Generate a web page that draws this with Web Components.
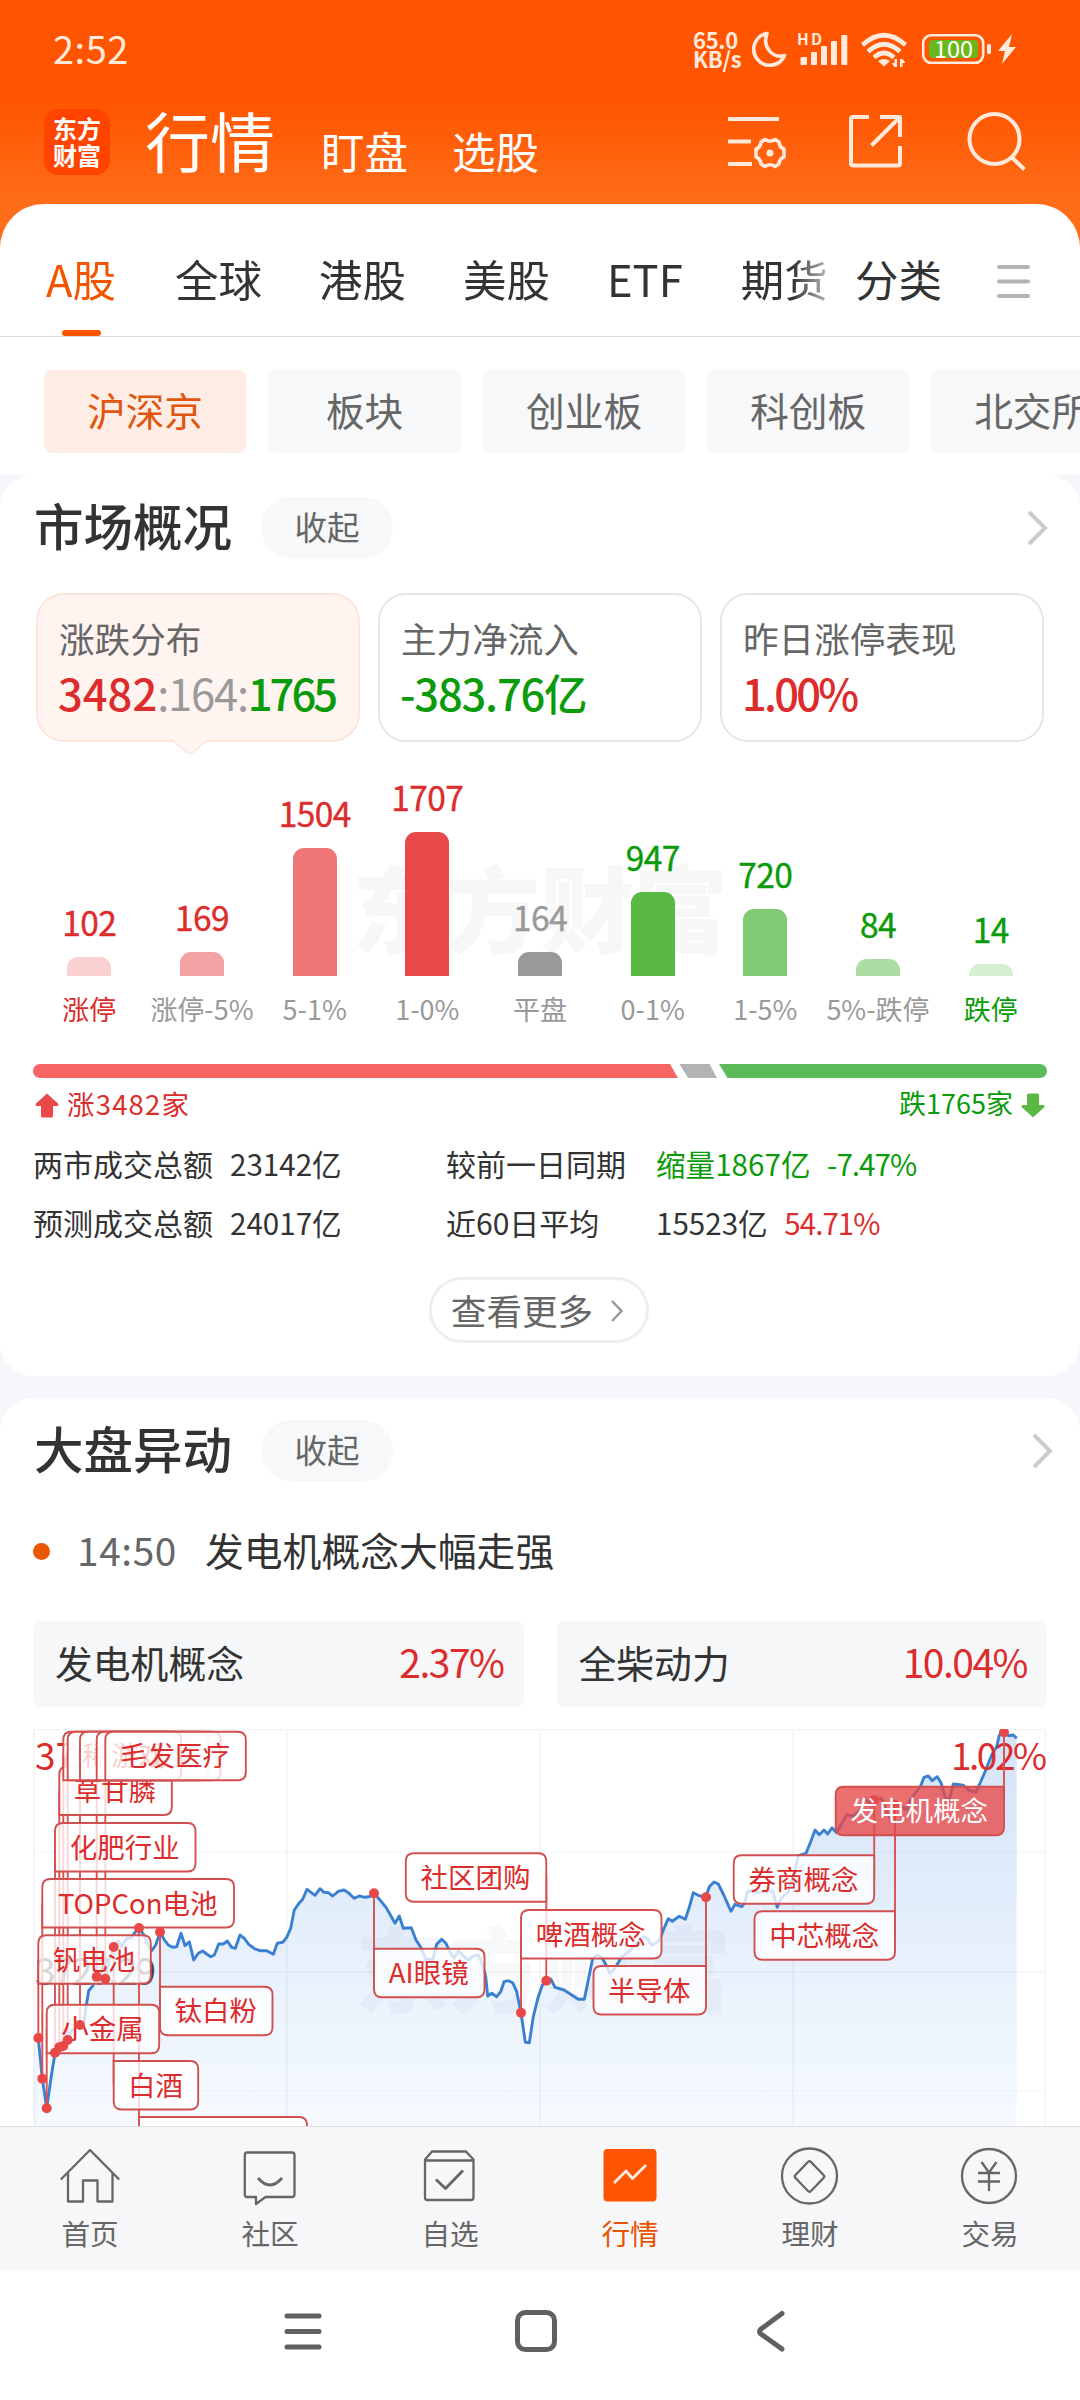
<!DOCTYPE html>
<html lang="zh-CN">
<head>
<meta charset="utf-8">
<title>行情</title>
<style>
  body {
    margin: 0;
    width: 1080px;
    height: 2400px;
    overflow: hidden;
    background: #f5f7fa;
    color: #333;
    font-family: "Noto Sans CJK SC", "Noto Sans", sans-serif;
  }
</style>
</head>
<body>
<market-page></market-page>

<script>
const RED = '#dc2c2c'
const GREEN = '#0a9b0a'

// attaches an open shadow root and fills it
const render = (host, html) => {
  const template = document.createElement('template')
  template.innerHTML = html
  host.attachShadow({ mode: 'open' }).appendChild(template.content.cloneNode(true))
}

customElements.define('status-bar',
  class extends HTMLElement {
    constructor () {
      super()
      render(this, `
        <time>2:52</time>
        <div class="speed"><span>65.0</span><span>KB/s</span></div>
        <svg width="342" height="96" viewBox="738 0 342 96" fill="none" stroke="#ffeadd">
          <path stroke-width="3.6" stroke-linejoin="round" d="M767 33.5A16 16 0 1 0 784.5 55.5C772 59 762 46 767 33.5Z"/>
          <g fill="#ffeadd" stroke="none">
            <rect x="800.5" y="57" width="6.5" height="8" rx="1"/>
            <rect x="811" y="52" width="6" height="13" rx="1"/>
            <rect x="821" y="46" width="6" height="19" rx="1"/>
            <rect x="831" y="41" width="6" height="24" rx="1"/>
            <rect x="841.3" y="35" width="6" height="30" rx="1"/>
            <path d="M878 61Q884 57 890 61L884 66.500Z"/>
            <rect x="987" y="44" width="4" height="10" rx="1.500"/>
            <path d="M1012 34L998 51H1005L1002 64L1016 47H1009Z"/>
            <path d="M897 59v8h-2.500l-3-4h3v-4ZM900 67v-8h2.500l3 4h-3v4Z"/>
            <text x="797" y="45" font-size="15.500" font-weight="700" textLength="25">HD</text>
          </g>
          <path stroke-width="4.600" d="M862.500 45Q884 25.500 905.500 45M868 51.500Q884 37 900 51.500M874 57.500Q884 48.500 894 57.500"/>
          <rect x="923.2" y="35.2" width="60" height="27.600" rx="8" stroke-width="2.600"/>
          <rect x="929" y="40" width="49" height="18" rx="4" fill="#6ab71b" stroke="none"/>
          <text x="953.5" y="57.500" text-anchor="middle" font-size="23.500" fill="#fff" stroke="none" textLength="39">100</text>
        </svg>
        <style>
          :host { display: flex; height: 96px; color: #ffeadd; }
          time { width: 640px; padding-left: 53px; font-size: 38px; line-height: 95px; letter-spacing: .5px; }
          .speed { display: flex; flex-direction: column; width: 45px; padding-top: 30px; font-size: 22px; font-weight: 700; line-height: 18.500px; letter-spacing: -.3px; }
        </style>`)
    }
  })

customElements.define('app-header',
  class extends HTMLElement {
    constructor () {
      super()
      render(this, `
        <div class="logo"><span>东方</span><span>财富</span></div>
        <h1>行情</h1>
        <span class="link">盯盘</span>
        <span class="link">选股</span>
        <svg width="310" height="64" viewBox="722 109 310 64" fill="none" stroke="#ffe9db" stroke-width="4">
          <path d="M728 119H779M728 141.500H751M728 164H752"/>
          <path stroke-width="3.600" stroke-linejoin="round" d="M765 139.500Q770 143 775 139.500L779 142Q779.500 147.500 784 149V157Q779.500 158.500 779 164L775 166.500Q770 163 765 166.500L761 164Q760.500 158.500 756 157V149Q760.500 147.500 761 142Z"/>
          <circle cx="770" cy="153" r="3.500" fill="#ffe9db" stroke="none"/>
          <path stroke-linejoin="round" d="M869 117H853Q851 117 851 119V163.500Q851 165.500 853 165.500H898Q900 165.500 900 163.500V146M880 117H900V137M900 117L871.500 145.500"/>
          <circle cx="994.5" cy="139" r="25"/>
          <path d="M1011.500 157L1024.500 169.500"/>
        </svg>
        <style>
          :host { display: flex; height: 108px; padding-left: 44px; color: #fff; }
          .logo {
            display: flex; flex-direction: column; align-items: center; box-sizing: border-box;
            width: 66px; height: 66px; margin-top: 13px; padding-top: 5px; border-radius: 14px;
            background: #ff4400; font-size: 24px; font-weight: 700; line-height: 27px;
          }
          h1 { width: 176px; margin: 0 0 0 35px; font-size: 65px; font-weight: 400; line-height: 86px; }
          .link { width: 131px; padding-top: 18px; font-size: 43.500px; line-height: 74px; }
          svg { margin: 13px 0 0 139px; }
        </style>`)
    }
  })

customElements.define('market-tabs',
  class extends HTMLElement {
    constructor () {
      super()
      render(this, `
        <div class="scroll">
          <span class="on">A股</span><span>全球</span><span>港股</span><span>美股</span><span>ETF</span><span>期货</span>
        </div>
        <span class="all">分类</span>
        <svg width="36" height="36" stroke="#b3b3b3" stroke-width="4" stroke-linecap="round"><path d="M3 4H32M3 18.500H32M3 33H32"/></svg>
        <style>
          :host {
            display: flex; align-items: center; height: 132px; padding-left: 45px;
            background: #fff; border-bottom: 1px solid #ddd; border-radius: 44px 44px 0 0; font-size: 43.500px;
          }
          .scroll {
            display: flex; gap: 57px; width: 784px; overflow: hidden; white-space: nowrap; line-height: 132px;
            -webkit-mask-image: linear-gradient(90deg, #000 748px, rgba(0, 0, 0, .35) 782px);
            mask-image: linear-gradient(90deg, #000 748px, rgba(0, 0, 0, .35) 782px);
          }
          .scroll span { flex: none; height: 132px; line-height: 149px; }
          .scroll span:last-child { margin-left: 1px; }
          .scroll .on { position: relative; margin-right: 2px; padding-left: 1px; color: #f25500; }
          .on::after { content: ""; position: absolute; left: 17px; bottom: 0; width: 39px; height: 6px; border-radius: 3px; background: #ff5500; }
          .all { margin-left: 26px; line-height: 149px; height: 132px; }
          svg { margin: 21px 0 0 54px; }
        </style>`)
    }
  })

customElements.define('board-chips',
  class extends HTMLElement {
    constructor () {
      super()
      render(this, `
        <span class="on">沪深京</span><span>板块</span><span>创业板</span><span>科创板</span><span>北交所</span>
        <style>
          :host { display: flex; gap: 22px; height: 83px; padding: 33px 0 22px 44px; overflow: hidden; background: #fff; }
          span {
            flex: none; box-sizing: border-box; min-width: 193px; padding: 0 43px; border-radius: 8px;
            background: #f7f8fa; color: #666; font-size: 38.700px; line-height: 79px; text-align: center;
          }
          .on { background: #ffede5; color: #e0560f; }
        </style>`)
    }
  })

customElements.define('section-card',
  class extends HTMLElement {
    constructor () {
      super()
      render(this, `
        <header>
          <h2>${this.getAttribute('heading')}</h2>
          <span>收起</span>
          <svg width="22" height="38" fill="none" stroke="#ccc" stroke-width="4"><path d="M2 3L18 19L2 35"/></svg>
        </header>
        <slot></slot>
        <style>
          :host { display: block; padding: 22px 33px 0; border-radius: 33px; background: #fff; }
          header { display: flex; align-items: center; height: 61px; }
          h2 { width: 227px; margin: -6px 0 0 1px; font-size: 49.500px; font-weight: 500; line-height: 56px; white-space: nowrap; }
          span { width: 132px; height: 61px; border-radius: 31px; background: #f7f8fa; color: #666; font-size: 32.500px; line-height: 57px; text-align: center; }
          svg { margin-left: auto; margin-right: var(--arrow-right, -2px); }
        </style>`)
    }
  })

customElements.define('summary-card',
  class extends HTMLElement {
    constructor () {
      super()
      render(this, `
        <label>${this.getAttribute('label')}</label>
        <div><slot></slot></div>
        <svg width="40" height="16"><path d="M2 0L17 12.500Q20 14.500 23 12.500L38 0" fill="#fff4f0" stroke="#fde5d9" stroke-width="1.500"/></svg>
        <style>
          :host {
            position: relative; box-sizing: border-box; flex: 1; height: 149px; padding: 21px 0 0 21px;
            border: 2px solid #e6e6e6; border-radius: 28px; background: #fff; white-space: nowrap;
          }
          :host([active]) { border-color: #fde5d9; background: #fff4f0; }
          label { display: block; color: #666; font-size: 35.600px; line-height: 44px; }
          div { margin: 7px 0 0 -1px; font-size: 43.500px; line-height: 52px; font-weight: 500; }
          svg { display: none; position: absolute; left: 132px; bottom: -16px; }
          :host([active]) svg { display: block; }
        </style>`)
    }
  })

customElements.define('spread-chart',
  class extends HTMLElement {
    constructor () {
      super()
      const columns = [
        ['102', '涨停', 19, '#f9d1d1', RED, RED],
        ['169', '涨停-5%', 24, '#f4a3a4', RED],
        ['1504', '5-1%', 128, '#ee7677', RED],
        ['1707', '1-0%', 144, '#e84848', RED],
        ['164', '平盘', 24, '#999', '#999'],
        ['947', '0-1%', 84, '#5ab943', GREEN],
        ['720', '1-5%', 67, '#83ca74', GREEN],
        ['84', '5%-跌停', 17, '#acdca1', GREEN],
        ['14', '跌停', 12, '#d6eed1', GREEN, GREEN]
      ]
      render(this, `
        <div class="mark">东方财富</div>
        ${columns.map(([count, range, height, fill, color, rangeColor]) => `
          <div class="col">
            <b style="color:${color}">${count}</b>
            <i style="height:${height}px;background:${fill}"></i>
            <span style="color:${rangeColor || '#999'}">${range}</span>
          </div>`).join('')}
        <style>
          :host { position: relative; display: grid; grid-template-columns: repeat(9, 1fr); height: 282px; white-space: nowrap; }
          .mark { position: absolute; left: 319px; top: 100px; color: #f7f7f7; font-size: 94px; font-weight: 900; line-height: 126px; }
          .col { position: relative; display: flex; flex-direction: column; align-items: center; justify-content: flex-end; }
          b { font-size: 33.500px; font-weight: 400; -webkit-text-stroke: .4px; line-height: 40px; margin-bottom: 15px; letter-spacing: -.6px; }
          i { width: 44px; border-radius: 11px 11px 0 0; }
          span { margin: 16px 0 -2px; font-size: 27px; line-height: 34px; }
        </style>`)
    }
  })

customElements.define('ratio-bar',
  class extends HTMLElement {
    constructor () {
      super()
      render(this, `
        <svg width="1014" height="14" viewBox="33 0 1014 14">
          <path d="M40 0H670L678 14H40A7 7 0 0 1 40 0Z" fill="#f76464"/>
          <path d="M679.500 0H709.500L717 14H688Z" fill="#b3b3b3"/>
          <path d="M719 0H1040A7 7 0 0 1 1040 14H727.500Z" fill="#5bbb5b"/>
        </svg>
        <div>
          <svg width="24" height="25"><path d="M12 .5L23.500 11Q24 13 22 13H18V23Q18 24.500 16.500 24.500H7.500Q6 24.500 6 23V13H2Q0 13 .5 11Z" fill="#e84848"/></svg>
          <span class="up">涨3482家</span>
          <span class="down">跌1765家</span>
          <svg width="24" height="25"><path d="M12 24.500L23.500 14Q24 12 22 12H18V2Q18 .5 16.500 .5H7.500Q6 .5 6 2V12H2Q0 12 .5 14Z" fill="#5ab943"/></svg>
        </div>
        <style>
          :host { display: block; padding-top: 40px; }
          svg { display: block; }
          div { display: flex; align-items: center; gap: 8px; height: 34px; margin-top: 10px; padding: 0 2px; font-size: 27px; line-height: 30px; }
          span { margin-top: -4px; }
          .up { color: ${RED}; font-size: 27.500px; letter-spacing: 1.200px; }
          .down { margin-left: auto; color: ${GREEN}; }
        </style>`)
    }
  })

customElements.define('turnover-table',
  class extends HTMLElement {
    constructor () {
      super()
      render(this, `
        <span>两市成交总额</span><span class="num">23142亿</span><span>较前一日同期</span><span class="num down">缩量1867亿 <em class="down">-7.47%</em></span>
        <span>预测成交总额</span><span class="num">24017亿</span><span>近60日平均</span><span class="num">15523亿 <em>54.71%</em></span>
        <style>
          :host {
            display: grid; grid-template-columns: 197px 216px 210px 1fr; grid-auto-rows: 59px;
            padding: 12px 0 0; font-size: 30px; line-height: 59px; white-space: nowrap;
          }
          .num { font-size: 29.600px; }
          em { margin-left: 10px; font-style: normal; color: ${RED}; letter-spacing: -1px; }
          .down { color: ${GREEN}; }
        </style>`)
    }
  })

customElements.define('more-button',
  class extends HTMLElement {
    constructor () {
      super()
      render(this, `
        <slot></slot>
        <svg width="16" height="24" fill="none" stroke="#999" stroke-width="2.500"><path d="M3 2L12.500 12L3 22"/></svg>
        <style>
          :host {
            display: flex; align-items: center; justify-content: center; gap: 16px; box-sizing: border-box;
            width: 220px; height: 66px; margin: 25px auto 33px; padding-right: 2px; border: 3px solid #eee; border-radius: 33px;
            color: #666; font-size: 35.600px; line-height: 56px;
          }
          :host { position: relative; left: -1px; }
          svg { margin-top: 2px; }
        </style>`)
    }
  })

customElements.define('alert-line',
  class extends HTMLElement {
    constructor () {
      super()
      render(this, `
        <i></i><time>${this.getAttribute('time')}</time><slot></slot>
        <style>
          :host { display: flex; align-items: center; height: 56px; padding: 40px 0 44px; font-size: 38.800px; line-height: 56px; white-space: nowrap; }
          i { width: 17px; height: 17px; margin-top: 5px; border-radius: 50%; background: #eb5600; }
          time { width: 128px; margin-left: 27px; color: #666; letter-spacing: .6px; }
        </style>`)
    }
  })

customElements.define('quote-box',
  class extends HTMLElement {
    constructor () {
      super()
      render(this, `
        <slot></slot><b>${this.getAttribute('change')}</b>
        <style>
          :host {
            display: flex; flex: 1; justify-content: space-between; height: 86px; padding: 0 20px 0 22px;
            border-radius: 8px; background: #f6f7f9; font-size: 37.800px; line-height: 81px;
          }
          b { color: ${RED}; font-size: 39px; font-weight: 400; letter-spacing: -1.500px; }
        </style>`)
    }
  })

customElements.define('index-chart',
  class extends HTMLElement {
    constructor () {
      super()
      const line = `38.3,2038 42.3,2078.7 46.7,2108.3 50.7,2080 55,2052.7 59.3,2047.3 63.3,2046 67.7,2040 71.7,2030 76,2028 80,2025 84,2022
        86,2007 88.7,1990.7 92.7,1986 96.7,1976.7 105.3,1978.7 109.3,1960 113.7,1947 118.3,1940.7 121.7,1946.7 126.7,1938 130.7,1938 134.7,1932.7
        139,1928 143.3,1934 147.3,1943.3 151.7,1950.7 155.7,1945 160,1932 164,1939.3 168.3,1945 172.3,1947.3 176.7,1946.7 181,1933.3 185,1945.7
        189.3,1941.7 193.7,1960 198.3,1953.3 202.7,1951 206.7,1954 210.7,1956.7 214.3,1955 218.7,1944 223.3,1944 227.3,1941 231.7,1947.3 235.3,1948.3
        240,1935 244.3,1938.3 248.7,1944.3 255,1949 260,1950.7 266.7,1950.7 273.3,1954.3 277.3,1943.3 282.7,1942.3 286.7,1937.3 290.7,1928.3
        294.3,1910 299,1903.3 302.7,1899.3 307,1889.3 315,1895.3 320,1888.7 324,1892.3 328.3,1892.7 332.7,1896 338.3,1891.3 344,1890 349,1893.3
        354,1898.3 359.3,1896 365,1897.3 370,1896.5 374,1893.3 380,1900 386,1907.3 395,1923.3 399.3,1916 403.3,1928.3 411.3,1927.7 416,1940
        420.7,1947.3 426,1959.3 432.7,1959.3 436.7,1944.3 441.7,1939.3 446,1943.3 449.3,1950.7 454,1958.3 458.3,1950.7 463.3,1956 468.3,1960
        473.3,1956 478.3,1955 482.7,1965 485.7,1976.7 487.7,1996 491.7,1993.3 496.7,1996.7 500.7,1991.7 504,1981.7 508.3,1980.7 512.7,1982.7
        516.7,1991.7 521,2012.7 525.3,2042.3 529.3,2042.7 533.3,2016.7 538.3,1996.7 542.3,1985.3 546.3,1980.7 551,1979.3 555,1987.3 564,1990
        573.3,1996 578.3,1999.3 584.3,1999.3 588.3,1980 592.7,1958.3 596.7,1955 601.7,1957.3 606,1965 610,1973.3 615,1968.3 621.7,1956.7 630,1950.7
        636.7,1942.7 643.3,1936.7 647.3,1938.3 651.7,1945.3 659.3,1940.7 664,1928.3 668.3,1918.7 672.3,1921.3 679.3,1916.3 685.3,1919.3 689.3,1907.3
        693.3,1892.7 698.3,1895.3 705.7,1897.3 709.3,1886.7 714,1882 718.3,1884 723.3,1894 731,1911.3 735,1904.3 741.7,1906.7 744.3,1903.3
        747.7,1891 758.3,1892.3 772.7,1891 777.3,1907.3 781,1898.3 788.3,1891.7 793.3,1876.7 798.3,1855.7 806,1853.3 810.7,1841.7 815,1830
        819.3,1834.7 824,1830 827.7,1834 832,1827.7 836.7,1832.7 841.7,1823.3 846.7,1815 853.3,1816 860,1810 865.3,1798.3 870,1804 874.3,1800
        881.7,1798.3 886,1810 890.7,1820 895,1805 900,1805 906.7,1810 910,1800 915,1793.3 920.7,1786 924,1777.3 928.3,1776 932.3,1780.7
        937.3,1776.7 941,1782.7 945,1796.7 949,1801 953.3,1784 963.3,1785.3 968.3,1790 975.7,1792.3 980,1783.3 985,1771.7 991.7,1755
        996.7,1746.7 999.3,1735 1004,1732.3 1008.3,1735.7 1013.3,1735 1016.7,1738.3`

      // text, box left, box top, box width, height of the dot on the line, pole side
      const flags = [
        ['TOPCon电池', 42.3, 1879, 191.7, 2078.7],
        ['钒电池', 38.3, 1935.3, 112.5, 2038],
        ['小金属', 46.7, 2004.7, 112.5, 2108.3],
        ['化肥行业', 55, 1823, 140.5, 2052.7],
        ['草甘膦', 59.3, 1766.5, 112.5, 2047.3],
        ['', 63.3, 1731.7, 112.5, 2046],
        ['稀土永磁', 67.7, 1731.7, 140.5, 2040],
        ['', 80, 1731.7, 140.5, 2025],
        ['游戏', 96.7, 1731.7, 84.5, 1976.7],
        ['毛发医疗', 105.3, 1731.7, 140.5, 1978.7],
        ['白酒', 113.7, 2061, 84.5, 1947],
        ['', 139, 2117, 168, 1928],
        ['钛白粉', 160, 1986.7, 112.5, 1932],
        ['AI眼镜', 374, 1948.7, 110.5, 1893.3],
        ['社区团购', 405.8, 1853.3, 140.5, 1980.7, 'right'],
        ['啤酒概念', 521, 1910, 140.5, 2012.7],
        ['半导体', 593.5, 1966, 112.5, 1897.3, 'right'],
        ['券商概念', 733.7, 1855.3, 140.5, 1800, 'right'],
        ['中芯概念', 754.5, 1911.3, 140.5, 1805, 'right']
      ]
      const poleX = ([, x, , w, , side]) => side ? x + w : x
      const box = ([text, x, y, w, dotY, side]) => {
        const h = 48.500
        // the corner where the pole leaves the box is square
        const r = [8, 8, 8, 8]
        if (dotY > y + h) r[side ? 2 : 3] = 0
        if (dotY < y) r[side ? 1 : 0] = 0
        return `
          <path d="M${x + r[0]} ${y}H${x + w - r[1]}q${r[1]} 0 ${r[1]} ${r[1]}V${y + h - r[2]}q0 ${r[2]} ${-r[2]} ${r[2]}H${x + r[3]}q${-r[3]} 0 ${-r[3]} ${-r[3]}V${y + r[0]}q0 ${-r[0]} ${r[0]} ${-r[0]}Z"/>
          <text x="${x + w / 2 - .5}" y="${y + 34.500}" text-anchor="middle">${text}</text>`
      }

      render(this, `
        <svg width="1080" height="397" viewBox="0 1729 1080 397">
          <defs>
            <linearGradient id="area" gradientUnits="userSpaceOnUse" x1="0" y1="1729" x2="0" y2="2126">
              <stop offset="0" stop-color="#d3e3f8"/><stop offset="1" stop-color="#f6faff"/>
            </linearGradient>
          </defs>
          <path d="M38.300 2126L${line}L1016.700 2126Z" fill="url(#area)"/>
          <path d="M34 2126V2038H38.300V2126Z" fill="#f0f6fe"/>
          <text class="mark" x="355" y="2006">东方财富</text>
          <g stroke="#5a6e8c" stroke-opacity=".08" stroke-width="1.600" fill="none">
            <path d="M34 2126V1729.500H1045V2126M287 1731V2126M540 1731V2126M793 1731V2126M34 1971.700H1045"/>
            <path d="M36 1851.700H1045M36 2091H1045" stroke-dasharray="2 2"/>
          </g>
          <text class="axis" x="35" y="1769.500" fill="${RED}">3766</text>
          <text class="axis" x="35" y="1984.500" fill="#444" textLength="121">3727.29</text>
          <polyline points="${line}" fill="none" stroke="#3a80d2" stroke-width="2.900" stroke-linejoin="round"/>
          <text class="axis" x="951" y="1769.500" fill="${RED}" textLength="96">1.02%</text>
          <path stroke="#d95050" stroke-width="1.900" d="${flags.map(f => `M${poleX(f)} ${f[2] + 24}V${f[4]}`).join('')}M1004 1732V1800"/>
          <g class="flags">${flags.map(box).join('')}</g>
          <g fill="#e84848">
            ${flags.map(f => `<circle cx="${poleX(f)}" cy="${f[4]}" r="5"/>`).join('')}
            <circle cx="1004" cy="1732.300" r="5"/>
          </g>
          <g class="flags active">${box(['发电机概念', 835.7, 1786.7, 168.3, 1732.3, 'right'])}</g>
        </svg>
        <style>
          :host { display: block; height: 397px; margin: 22px -33px 0; }
          svg { display: block; }
          .mark { font-size: 94px; font-weight: 900; fill: #5a6e8c; fill-opacity: .05; }
          .axis { font-size: 37px; }
          .flags { font-size: 27.500px; }
          .flags path { fill: #fff; fill-opacity: .78; stroke: #d24f4f; stroke-width: 1.900; }
          .flags text { fill: ${RED}; }
          .active path { fill: #e84848; }
          .active text { fill: #fff; }
        </style>`)
    }
  })

customElements.define('tab-item',
  class extends HTMLElement {
    constructor () {
      super()
      render(this, `
        <slot name="icon"></slot>
        <span><slot></slot></span>
        <style>
          :host { display: flex; flex-direction: column; align-items: center; flex: 1; padding-top: 19px; color: #666; }
          :host([active]) { color: #e85400; }
          span { font-size: 28.600px; line-height: 40px; margin-top: 7px; }
        </style>`)
    }
  })

customElements.define('tab-bar',
  class extends HTMLElement {
    constructor () {
      super()
      // all icons share a 60 x 60 box
      const icon = (body) => `<svg slot="icon" width="60" height="60" fill="none" stroke="#666" stroke-width="2.300" stroke-linejoin="round">${body}</svg>`
      render(this, `
        <tab-item>${icon('<path d="M.8 33.500L30 4L59.200 33.500M8 27V55.500H23V34.500H37.500V55.500H52.500V27"/>')}首页</tab-item>
        <tab-item>${icon('<path d="M7 6.500H52Q54.500 6.500 54.500 9V48.500Q54.500 51 52 51H25.500L16 58V51H7Q4.800 51 4.800 48.500V9Q4.800 6.500 7 6.500Z"/><path d="M18 32Q30 46 42 32" stroke-width="2.800"/>')}社区</tab-item>
        <tab-item>${icon('<path d="M12 5.500H46L53.500 13.500V51.500Q53.500 54 51 54H7.500Q5 54 5 51.500V13.500ZM5 14.500H53.500"/><path d="M16 33.500L25.500 42.500L43 24.500" stroke-width="2.800"/>')}自选</tab-item>
        <tab-item active>${icon('<rect x="3.500" y="3" width="53" height="52.500" rx="4" fill="#ff5500" stroke="none"/><path d="M14 37L26 25L32.500 32.500L46 19" stroke="#ffeee4" stroke-width="2.800"/>')}行情</tab-item>
        <tab-item>${icon('<circle cx="29.500" cy="30" r="27.500"/><path d="M31 16L43.500 29Q45 30.500 43.500 32L31 45Q29.500 46.500 28 45L15.500 32Q14 30.500 15.500 29L28 16Q29.500 14.500 31 16Z"/>')}理财</tab-item>
        <tab-item>${icon('<circle cx="29" cy="30" r="27"/><path d="M21.500 16L29 26.500L36.500 16M18 27H40M18 35.500H40M29 26.500V45"/>')}交易</tab-item>
        <style>
          :host { display: flex; box-sizing: border-box; height: 144px; border-top: 1px solid #dedee2; background: #f7f7fa; }
        </style>`)
    }
  })

customElements.define('nav-bar',
  class extends HTMLElement {
    constructor () {
      super()
      render(this, `
        <svg width="44" height="44"><path d="M6 7H38M6 22.500H38M6 38H38"/></svg>
        <svg width="44" height="44"><rect x="3.500" y="3.500" width="37" height="37" rx="8"/></svg>
        <svg width="44" height="44"><path d="M35 4.500L14 20Q11 22.500 14 25L35 40"/></svg>
        <style>
          :host { display: flex; justify-content: center; gap: 189px; height: 130px; padding-right: 8px; background: #fff; }
          svg { fill: none; margin-top: 39px; stroke: #606060; stroke-width: 5; stroke-linecap: round; }
        </style>`)
    }
  })

customElements.define('market-page',
  class extends HTMLElement {
    constructor () {
      super()
      render(this, `
        <div class="top">
          <status-bar></status-bar>
          <app-header></app-header>
          <market-tabs></market-tabs>
        </div>
        <board-chips></board-chips>
        <section-card heading="市场概况">
          <div class="cards">
            <summary-card label="涨跌分布" active><span class="up">3482</span><span class="flat">:164:</span><span class="down tight">1765</span></summary-card>
            <summary-card label="主力净流入"><span class="down flow">-383.76亿</span></summary-card>
            <summary-card label="昨日涨停表现"><span class="up rate">1.00%</span></summary-card>
          </div>
          <spread-chart></spread-chart>
          <ratio-bar></ratio-bar>
          <turnover-table></turnover-table>
          <more-button>查看更多</more-button>
        </section-card>
        <section-card class="moves" heading="大盘异动">
          <alert-line time="14:50">发电机概念大幅走强</alert-line>
          <div class="quotes">
            <quote-box change="2.37%">发电机概念</quote-box>
            <quote-box change="10.04%">全柴动力</quote-box>
          </div>
          <index-chart></index-chart>
        </section-card>
        <tab-bar></tab-bar>
        <nav-bar></nav-bar>
        <style>
          :host { display: flex; flex-direction: column; height: 2400px; }
          .top { background: linear-gradient(#ff5500 100px, #ff6d19 205px); }
          .cards { display: flex; gap: 18px; margin: 35px 3px 0; }
          .quotes { display: flex; gap: 33px; }
          .moves { margin-top: 22px; border-radius: 33px 33px 0 0; --arrow-right: -7px; }
          .up { color: ${RED}; }
          .flat { color: #999; font-weight: 400; letter-spacing: -1.200px; }
          .down { color: ${GREEN}; }
          .tight { letter-spacing: -3px; }
          .flow { letter-spacing: -1.200px; }
          .rate { letter-spacing: -2.800px; }
        </style>`)
    }
  })
</script>
</body>
</html>
